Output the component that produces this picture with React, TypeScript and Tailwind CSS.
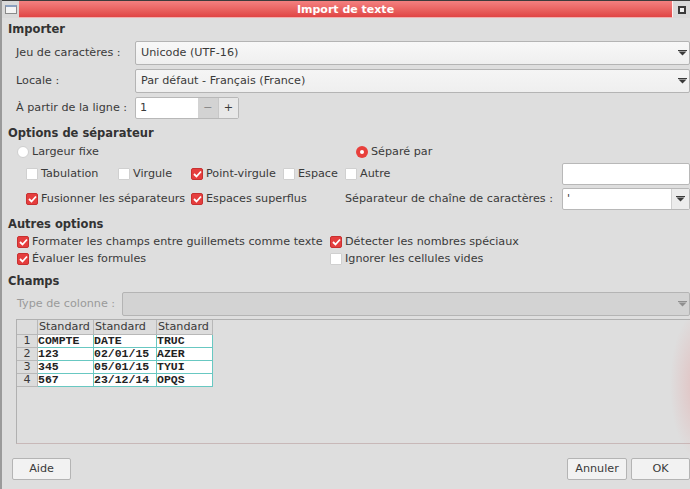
import React from "react";

const Arrow = ({ color = "#3a3a3a" }: { color?: string }) => (
  <svg width="9" height="6" viewBox="0 0 9 6">
    <rect x="0" y="0" width="9" height="1" fill={color} />
    <path d="M0.5 1.5 H8.5 L4.5 5.5 Z" fill={color} />
  </svg>
);

const Check = ({ on }: { on?: boolean }) =>
  on ? (
    <span className="w-[12px] h-[12px] shrink-0 rounded-[2px] bg-[#e53e3e] border border-[#c83030] flex items-center justify-center">
      <svg width="9" height="8" viewBox="0 0 9 8">
        <path d="M1 4 L3.5 6.5 L8 1.5" stroke="white" strokeWidth="1.8" fill="none" />
      </svg>
    </span>
  ) : (
    <span className="w-[12px] h-[12px] shrink-0 rounded-[1px] bg-white border border-[#d0d0d0]" />
  );

const Radio = ({ on }: { on?: boolean }) =>
  on ? (
    <span className="w-[12px] h-[12px] shrink-0 rounded-full bg-[#e8403c] flex items-center justify-center">
      <span className="w-[4px] h-[4px] rounded-full bg-white" />
    </span>
  ) : (
    <span className="w-[12px] h-[12px] shrink-0 rounded-full bg-white border border-[#cfcfcf]" />
  );

const Opt = ({ on, label, w, radio }: { on?: boolean; label: string; w?: string; radio?: boolean }) => (
  <div className={`flex items-center gap-[3px] whitespace-nowrap shrink-0 ${w ?? ""}`}>
    {radio ? <Radio on={on} /> : <Check on={on} />}
    <span>{label}</span>
  </div>
);

const rows = [
  ["COMPTE", "DATE", "TRUC"],
  ["123", "02/01/15", "AZER"],
  ["345", "05/01/15", "TYUI"],
  ["567", "23/12/14", "OPQS"],
];

export default function App() {
  return (
    <div className="w-[690px] h-[489px] bg-[#dedede] relative overflow-hidden text-[11.2px] text-[#3a3a3a] whitespace-nowrap font-['DejaVu_Sans',sans-serif] border-l-2 border-[#9a9a9a]">
      {/* title bar */}
      <div className="h-[18px] flex border-t border-[#3c3c3c] bg-[#d9d9d9]">
        <div className="w-[17px] flex items-center justify-center">
          <span className="w-[12px] h-[9px] bg-[#f4f4f4] border border-[#8a8a8a] border-t-2 border-t-[#8aa0c0]" />
        </div>
        <div className="flex-1 bg-gradient-to-b from-[#f38080] to-[#e04444] border-b border-[#f0b0b0] border-r border-r-[#fff0f0] flex items-center justify-center text-white font-bold text-[11px] leading-none">
          Import de texte
        </div>
        <div className="w-[17px] flex items-center justify-center">
          <span className="w-[8px] h-[8px] border-2 border-[#3a3a3a] bg-[#eee]" />
        </div>
      </div>

      <div className="flex flex-col">
        <div className="h-[16px] mt-[4px] pl-[6px] font-bold text-[11.5px] text-[#333] flex items-center">Importer</div>

        <div className="h-[24px] mt-[3px] flex items-center">
          <span className="w-[133px] pl-[14px]">Jeu de caractères :</span>
          <div className="flex-1 h-full bg-gradient-to-b from-[#f8f8f8] to-[#efefef] border border-[#b4b4b4] rounded-[2px] flex items-center pl-[5px] pr-[2px] justify-between">
            <span>Unicode (UTF-16)</span>
            <Arrow />
          </div>
        </div>

        <div className="h-[24px] mt-[4px] flex items-center">
          <span className="w-[133px] pl-[14px]">Locale :</span>
          <div className="flex-1 h-full bg-gradient-to-b from-[#f5f5f5] to-[#efefef] border border-[#b4b4b4] rounded-[2px] flex items-center pl-[5px] pr-[2px] justify-between">
            <span>Par défaut - Français (France)</span>
            <Arrow />
          </div>
        </div>

        <div className="h-[22px] mt-[4px] flex items-center">
          <span className="w-[133px] pl-[14px]">À partir de la ligne :</span>
          <div className="h-full w-[104px] flex border border-[#b8b8b8] rounded-[2px] bg-white">
            <span className="w-[62px] flex items-center pl-[4px]">1</span>
            <span className="w-[20px] bg-[#d3d3d3] flex items-center justify-center text-[#8a8a8a]">−</span>
            <span className="w-[20px] bg-[#e8e8e8] border-l border-[#c8c8c8] flex items-center justify-center">+</span>
          </div>
        </div>

        <div className="h-[16px] mt-[7px] pl-[6px] font-bold text-[11.5px] text-[#333] flex items-center">Options de séparateur</div>

        <div className="h-[16px] mt-[2px] pl-[15px] flex items-center">
          <Opt radio label="Largeur fixe" w="w-[339px]" />
          <Opt radio on label="Séparé par" />
        </div>

        <div className="h-[22px] mt-[3px] pl-[24px] flex items-center">
          <Opt label="Tabulation" w="w-[92px]" />
          <Opt label="Virgule" w="w-[73px]" />
          <Opt on label="Point-virgule" w="w-[92px]" />
          <Opt label="Espace" w="w-[62px]" />
          <Opt label="Autre" w="w-[217px]" />
          <div className="flex-1 h-full bg-white border border-[#b8b8b8] rounded-[2px]" />
        </div>

        <div className="h-[22px] mt-[3px] pl-[24px] flex items-center">
          <Opt on label="Fusionner les séparateurs" w="w-[165px]" />
          <Opt on label="Espaces superflus" w="w-[154px]" />
          <span className="w-[217px] shrink-0">Séparateur de chaîne de caractères :</span>
          <div className="flex-1 h-full bg-white border border-[#b8b8b8] rounded-[2px] flex">
            <span className="flex-1 pl-[4px] flex items-center">'</span>
            <span className="w-[18px] bg-[#ececec] border-l border-[#d0d0d0] flex items-center justify-center">
              <Arrow />
            </span>
          </div>
        </div>

        <div className="h-[16px] mt-[7px] pl-[6px] font-bold text-[11.5px] text-[#333] flex items-center">Autres options</div>

        <div className="h-[16px] mt-[1px] pl-[15px] flex items-center">
          <Opt on label="Formater les champs entre guillemets comme texte" w="w-[313px]" />
          <Opt on label="Détecter les nombres spéciaux" />
        </div>
        <div className="h-[16px] mt-[1px] pl-[15px] flex items-center">
          <Opt on label="Évaluer les formules" w="w-[313px]" />
          <Opt label="Ignorer les cellules vides" />
        </div>

        <div className="h-[16px] mt-[7px] pl-[6px] font-bold text-[11.5px] text-[#333] flex items-center">Champs</div>

        <div className="h-[24px] mt-[2px] flex items-center">
          <span className="w-[120px] pl-[15px] text-[#9a9a9a]">Type de colonne :</span>
          <div className="flex-1 h-full bg-[#d3d3d3] border border-[#b4b4b4] rounded-[2px] flex items-center justify-end pr-[2px]">
            <Arrow color="#8f8f8f" />
          </div>
        </div>

        <div className="h-[125px] mt-[3px] ml-[14px] border border-r-0 border-[#b0b0b0] border-b-[#c8b8b8]">
          <div className="grid grid-cols-[21px_56px_63px_56px] grid-rows-[15px_13px_13px_13px_13px] w-fit leading-none">
            <div className="bg-[#dcdcdc] border-r border-b border-[#b8b8b8]" />
            {["Standard", "Standard", "Standard"].map((h, i) => (
              <div key={i} className="bg-[#dcdcdc] border-r border-b border-[#b8b8b8] pl-[1px] flex items-center">{h}</div>
            ))}
            {rows.map((r, i) => (
              <React.Fragment key={i}>
                <div className="bg-[#dcdcdc] border-r border-b border-[#b8b8b8] flex items-center justify-center">{i + 1}</div>
                {r.map((c, j) => (
                  <div key={j} className="bg-white border-r border-b border-[#68c8c2] flex items-center font-['Liberation_Mono',monospace] font-bold text-[11.5px] text-[#222]">
                    {c}
                  </div>
                ))}
              </React.Fragment>
            ))}
          </div>
        </div>

        <div className="h-[22px] mt-[14px] flex items-center pl-[10px]">
          <button className="w-[59px] h-full bg-[#f2f2f2] border border-[#b4b4b4] rounded-[2px]">Aide</button>
          <div className="flex-1" />
          <button className="w-[60px] h-full bg-[#f2f2f2] border border-[#b4b4b4] rounded-[2px]">Annuler</button>
          <button className="w-[59px] h-full ml-[4px] bg-[#f2f2f2] border border-[#b4b4b4] rounded-[2px]">OK</button>
        </div>
      </div>

      {/* reddish glow at right edge */}
      <div className="absolute right-[-40px] top-[310px] w-[60px] h-[150px] rounded-full bg-[radial-gradient(closest-side,rgba(230,150,150,0.45),rgba(230,150,150,0))] pointer-events-none" />
    </div>
  );
}
